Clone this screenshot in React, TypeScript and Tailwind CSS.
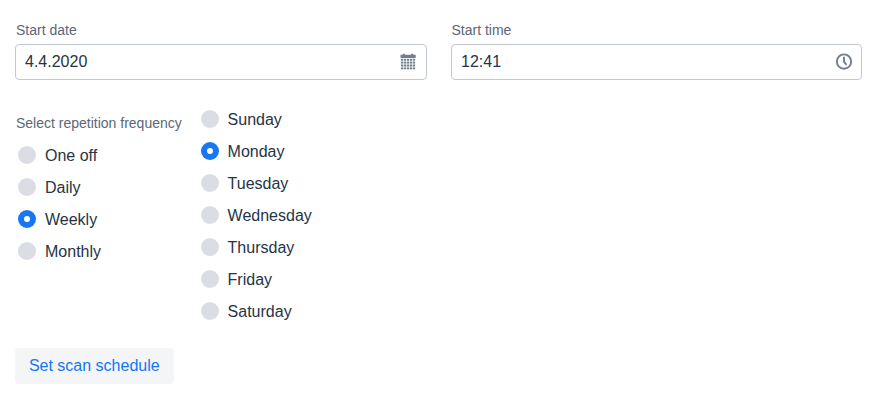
const days = ['Sunday', 'Monday', 'Tuesday', 'Wednesday', 'Thursday', 'Friday', 'Saturday'];
const frequencies = ['One off', 'Daily', 'Weekly', 'Monthly'];

function RadioList({ items, selected }: { items: string[]; selected: string }) {
  return (
    <div role="radiogroup">
      {items.map((item) => (
        <div key={item} role="radio" aria-checked={item === selected} className="flex h-8 items-center gap-[9px]">
          <span
            className={
              item === selected
                ? 'flex size-[18px] items-center justify-center rounded-full bg-[#1676f3]'
                : 'size-[18px] rounded-full bg-[#dadee4]'
            }
          >
            {item === selected && <span className="size-[6px] rounded-full bg-white" />}
          </span>
          <span className="pt-0.5">{item}</span>
        </div>
      ))}
    </div>
  );
}

function CalendarIcon() {
  return (
    <svg width="18" height="18" viewBox="0 0 18 18" fill="#727e8d">
      <path d="M1.5 1.8h2.2V0.8h2v1h6.6v-1h2v1h2.4V5H1.5z" />
      <path d="M2 6h14.2v10H2z" opacity="0.15" />
      {[5.8, 8.7, 11.6, 14.5].map((y) =>
        [1.9, 4.9, 7.9, 10.9, 13.9].map((x) => <rect key={x + '-' + y} x={x} y={y} width="2.2" height="1.8" />),
      )}
    </svg>
  );
}

function ClockIcon() {
  return (
    <svg width="18" height="18" viewBox="0 0 18 18" fill="none" stroke="#727e8d" strokeWidth="1.9">
      <circle cx="9" cy="8.6" r="7.2" />
      <path d="M9 3.8v5l2.6 3" />
    </svg>
  );
}

export default function App() {
  return (
    <main className="h-[406px] w-[872px] bg-white pt-5 pl-[15px] font-['Liberation_Sans',Arial,sans-serif] text-base text-[#263446]">
      <div className="flex gap-6">
        <div className="w-[412px]">
          <div className="h-6 pl-px text-sm leading-5 text-[#5b6777]">Start date</div>
          <div className="flex h-9 items-center justify-between rounded-[4px] border border-[#c2c8d2] pr-[9px] pl-[9px]">
            <span>4.4.2020</span>
            <CalendarIcon />
          </div>
        </div>
        <div className="w-[411px]">
          <div className="h-6 pl-[0.5px] text-sm leading-5 text-[#5b6777]">Start time</div>
          <div className="flex h-9 items-center justify-between rounded-[4px] border border-[#c2c8d2] pr-2 pl-[9px]">
            <span>12:41</span>
            <ClockIcon />
          </div>
        </div>
      </div>
      <div className="mt-[23px] flex pl-[3px]">
        <div className="w-[182.6px] pt-[10px]">
          <div className="-ml-0.5 h-[26px] text-sm leading-5 text-[#5b6777]">Select repetition frequency</div>
          <RadioList items={frequencies} selected="Weekly" />
        </div>
        <RadioList items={days} selected="Monday" />
      </div>
      <button className="mt-[21px] flex h-9 w-[159px] items-center justify-center rounded-[4px] bg-[#f3f5f7] pr-[0.5px] text-[#1676f3]">
        Set scan schedule
      </button>
    </main>
  );
}
